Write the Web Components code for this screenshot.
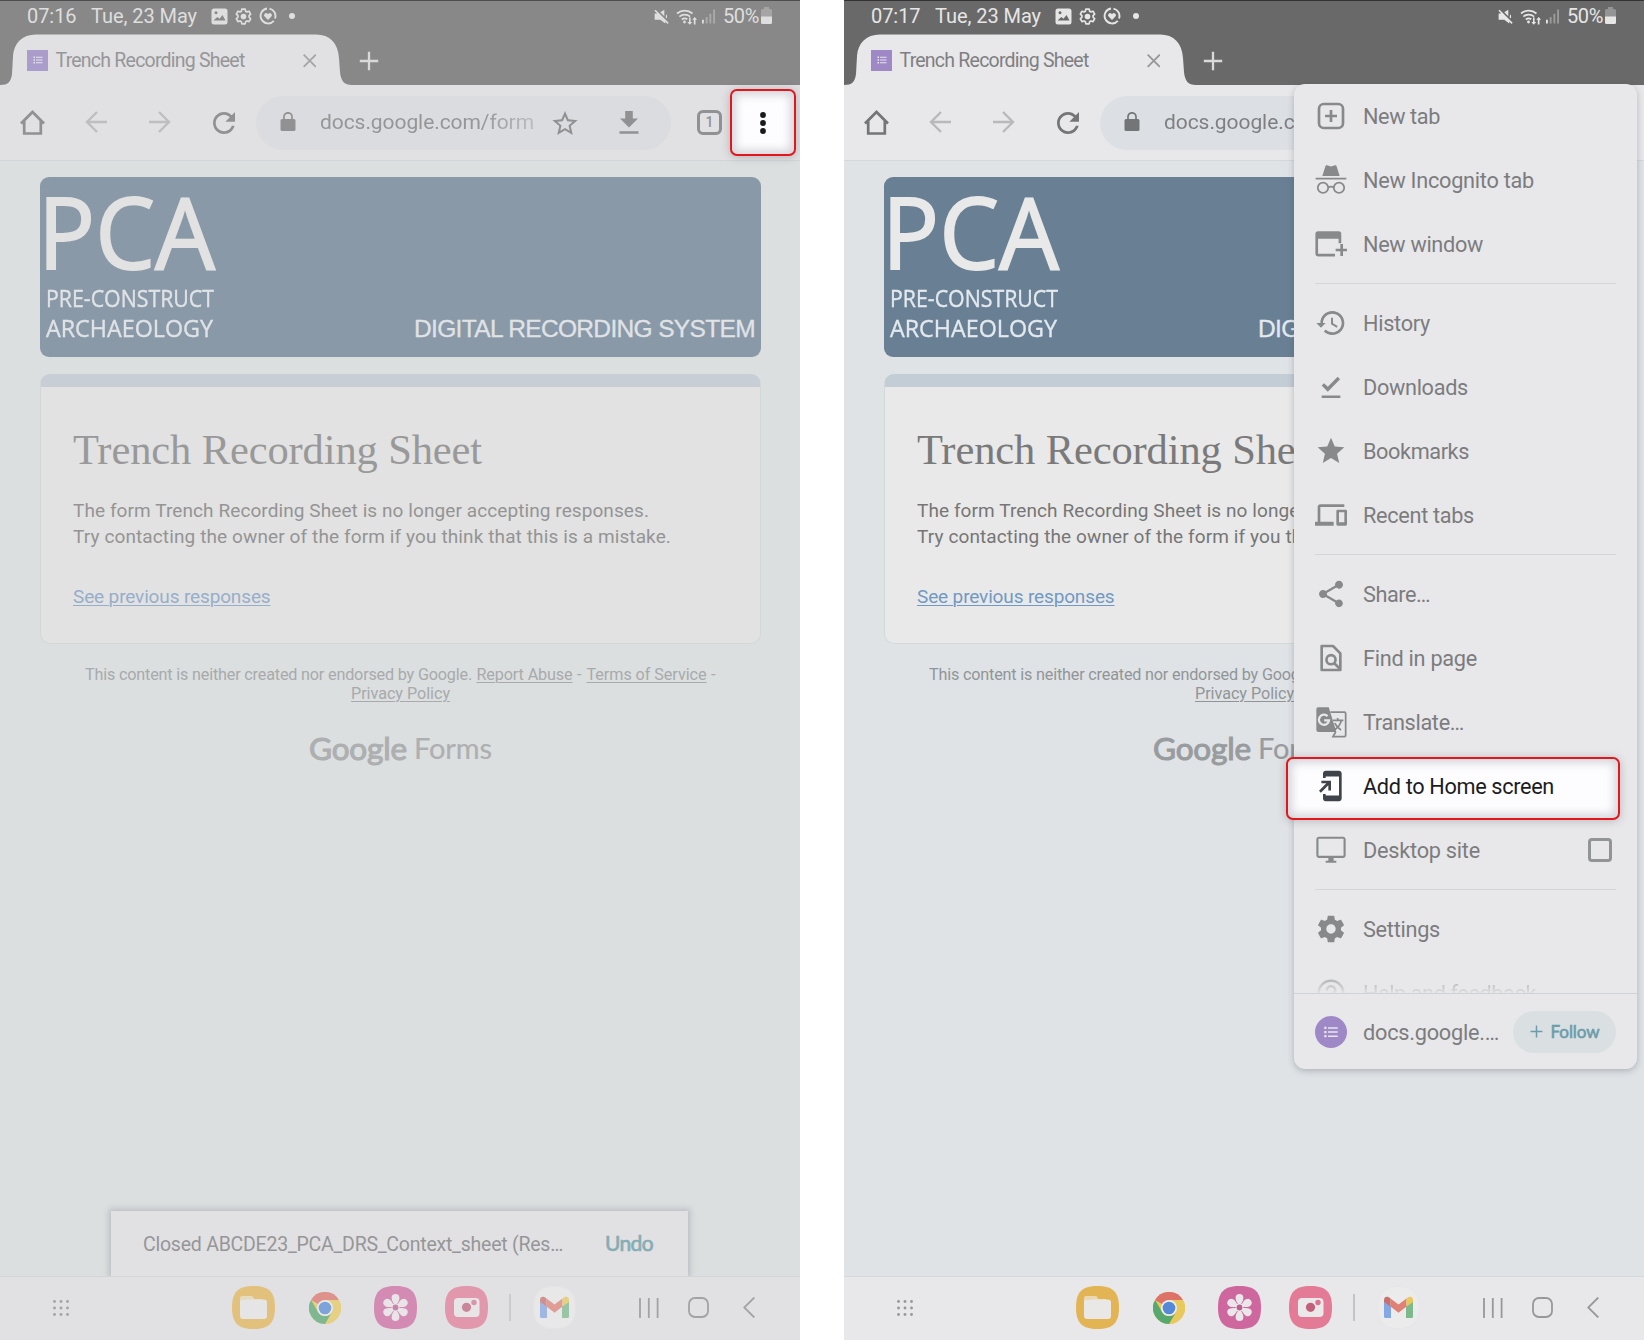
<!DOCTYPE html>
<html lang="en">
<head>
<meta charset="utf-8">
<title>Trench Recording Sheet</title>
<style>
html,body{margin:0;background:#fff}
body{width:1644px;height:1340px;overflow:hidden;display:flex;gap:44px;font-family:Roboto,"Liberation Sans",sans-serif}
</style>
</head>
<body>
<phone-screen variant="before">
  <status-bar slot="chrome"><fit-text w="49.5">07:16</fit-text></status-bar>
  <tab-strip slot="chrome"></tab-strip>
  <tool-bar slot="chrome"></tool-bar>
  <form-page></form-page>
  <snack-bar slot="over"></snack-bar>
  <dock-bar slot="dock"></dock-bar>
  <call-out slot="over" style="left:730px;top:89px;width:66px;height:67px" class="dots"><ui-icon name="dots" w="8" h="24"></ui-icon></call-out>
</phone-screen>
<phone-screen variant="after">
  <status-bar slot="chrome"><fit-text w="49.5">07:17</fit-text></status-bar>
  <tab-strip slot="chrome"></tab-strip>
  <tool-bar slot="chrome"></tool-bar>
  <form-page></form-page>
  <overflow-menu slot="over"></overflow-menu>
  <dock-bar slot="dock"></dock-bar>
</phone-screen>
<script>
const define = (name, html, init) => {
  const tpl = document.createElement('template');
  tpl.innerHTML = html;
  customElements.define(name, class extends HTMLElement {
    constructor() {
      super();
      this.attachShadow({ mode: 'open' }).append(tpl.content.cloneNode(true));
    }
    connectedCallback() { if (init) init.call(this); }
  });
};

const LIST = '<path d="M3 5h3v3H3zM3 10.5h3v3H3zM3 16h3v3H3zM8 5.5h13v2H8zM8 11h13v2H8zM8 16.5h13v2H8z"/>';
const ICONS = {
  dots: ['0 0 8 24', '<circle cx="4" cy="4" r="2.9"/><circle cx="4" cy="12" r="2.9"/><circle cx="4" cy="20" r="2.9"/>'],
  list: ['0 0 24 24', LIST],
  image: ['0 0 17 17', '<path fill-rule="evenodd" d="M3 .5h11A2.5 2.5 0 0 1 16.500 3v11a2.500 2.500 0 0 1-2.500 2.500H3A2.500 2.500 0 0 1 .5 14V3A2.500 2.500 0 0 1 3 .5zM2.500 12.500h12l-3-5.500-3 3.700-2.200-1.700zM5 3.300a1.500 1.500 0 1 0 .01 0z"/>'],
  gearline: ['0 0 24 24', '<path fill="none" stroke="currentColor" stroke-width="2.400" stroke-linejoin="round" d="M9.700 1.500h4.600l.7 3 1.800 1 3-.9 2.300 4-2.200 2.200v2.200l2.200 2.200-2.300 4-3-.9-1.800 1-.7 3.200H9.700l-.7-3.200-1.800-1-3 .9-2.300-4L4.100 13v-2.200L1.900 8.600l2.300-4 3 .9 1.800-1z"/><circle cx="12" cy="12" r="4"/>'],
  heart: ['0 0 18 18', '<path fill="none" stroke="currentColor" stroke-width="1.900" d="M8 1.500A7.500 7.500 0 1 0 14.800 13.800M16 11.500A7.500 7.500 0 0 0 10.500 1.600"/><path d="M9 13 5.600 9.600a2 2 0 0 1 3-2.800l.4.4.4-.4a2 2 0 0 1 3 2.800z"/>'],
  mute: ['0 0 24 24', '<path d="M16.500 1v10.500L10 5zM1 7h5l12 12.500V23l-8-6H1zM2.500 1 23.500 22l-1.800 1.800L.7 2.800zM19.500 8.500c1.500 1.500 2 4 1 6.500l-2-2z"/>'],
  wifi: ['0 0 22 17', '<g fill="none" stroke="currentColor" stroke-width="1.700"><path d="M1 5.500a12 12 0 0 1 15.500 0M3.400 8.600a8 8 0 0 1 10.700 0M5.800 11.500a4.600 4.600 0 0 1 5.500-.2"/></g><circle cx="8.500" cy="14" r="1.400"/><path d="M13 9.500h1.600V14h1.600L13.800 16.800 11.300 14H13zM17.800 16.500v-4.700h-1.500l2.400-2.800 2.400 2.800h-1.600v4.700z"/>'],
  signal: ['0 0 14 15', '<path d="M0 11h2v4H0z"/><path opacity=".4" d="M4 8h2v7H4zM8 4.500h2V15H8zM12 0h2v15h-2z"/>'],
  battery: ['0 0 11 17', '<path opacity=".35" d="M3 0h5v2h1.500A1.500 1.500 0 0 1 11 3.500V10H0V3.500A1.500 1.500 0 0 1 1.500 2H3z"/><path d="M0 9.500h11v6A1.500 1.500 0 0 1 9.500 17h-8A1.500 1.500 0 0 1 0 15.500z"/>'],
  close: ['0 0 14 14', '<path fill="none" stroke="currentColor" stroke-width="1.900" d="m.7.7 12.600 12.600m0-12.600L.7 13.300"/>'],
  plus: ['0 0 20 20', '<path fill="none" stroke="currentColor" stroke-width="2.300" d="M10 .8v18.400M.8 10h18.400"/>'],
  home: ['0 0 25 25', '<path fill="none" stroke="currentColor" stroke-width="2.700" d="M1 13.500 12.500 2 24 13.500M4.200 11v12.500h16.600V11"/>'],
  back: ['0 0 22 22', '<path fill="none" stroke="currentColor" stroke-width="2.400" d="M22 11H2M12 1 2 11l10 10"/>'],
  forward: ['0 0 22 22', '<path fill="none" stroke="currentColor" stroke-width="2.400" d="M0 11h20M10 1l10 10-10 10"/>'],
  reload: ['4 4 16 16', '<path d="M17.650 6.350C16.200 4.900 14.210 4 12 4c-4.420 0-7.990 3.580-7.990 8s3.570 8 7.990 8c3.730 0 6.840-2.550 7.730-6h-2.080c-.82 2.330-3.040 4-5.650 4-3.310 0-6-2.690-6-6s2.690-6 6-6c1.660 0 3.140.69 4.220 1.780L13 11h7V4l-2.350 2.350z"/>'],
  lock: ['0 0 16 19', '<path d="M2 7h12q1.500 0 1.500 1.500v9q0 1.500-1.500 1.500H2Q.5 19 .5 17.500v-9Q.5 7 2 7z"/><path fill="none" stroke="currentColor" stroke-width="1.700" d="M4 8V4.800a4 4 0 0 1 8 0V8"/>'],
  starline: ['2 2 20 19', '<path d="M22 9.240l-7.190-.62L12 2 9.190 8.630 2 9.240l5.460 4.730L5.820 21 12 17.270 18.180 21l-1.630-7.030L22 9.240zM12 15.400l-3.760 2.270 1-4.280-3.320-2.880 4.380-.38L12 6.100l1.710 4.040 4.380.38-3.320 2.880 1 4.280L12 15.400z"/>'],
  download: ['0 0 20 23', '<path d="M6.200 0h7.600v7.500H19L10 16.500 1 7.500h5.200zM.5 20.200h19v2.600H.5z"/>'],
  newtab: ['0 0 24 24', '<rect x="3" y="3" width="18" height="18" rx="3.600" fill="none" stroke="currentColor" stroke-width="2"/><path d="M11 7.500h2V11h3.500v2H13v3.500h-2V13H7.500v-2H11z"/>'],
  incognito: ['0 0 24 24', '<path d="M7.800 1.600c.2-.6.700-.8 1.200-.6L12 1.800 15 1c.5-.2 1 .1 1.200.6L18.500 9h-13zM.5 10.300h23v1.300H.5z"/><g fill="none" stroke="currentColor" stroke-width="1.350"><circle cx="6" cy="17.800" r="3.900"/><circle cx="18" cy="17.800" r="3.900"/><path d="M9.900 17.500q2.100-1.100 4.200 0"/></g>'],
  window: ['0 0 24 24', '<path fill-rule="evenodd" d="M2.300 2.500h15.400A2 2 0 0 1 19.700 4.500v7h-2V8H2.300v11.300H15v2H2.300a2 2 0 0 1-2-2V4.500a2 2 0 0 1 2-2zM19 12h2v3.500h3v2h-3V21h-2v-3.500h-3.500v-2H19z"/>'],
  history: ['0 0 24 24', '<path d="M13 3c-4.970 0-9 4.030-9 9H1l3.500 3.500L8 12H6c0-3.870 3.130-7 7-7s7 3.130 7 7-3.130 7-7 7c-1.930 0-3.680-.79-4.940-2.060l-1.420 1.420C8.270 19.990 10.510 21 13 21c4.970 0 9-4.030 9-9s-4.030-9-9-9zm-1 5v5l4.280 2.540.72-1.210-3.500-2.080V8H12z"/>'],
  done: ['0 0 24 24', '<path d="M5 18.300h14v2H5zM9.600 15.500 5 10.900l1.800-1.800 2.800 2.800L17 4.300l1.800 1.900z"/>'],
  star: ['0 0 24 24', '<path d="M12 17.270L18.180 21l-1.640-7.030L22 9.240l-7.190-.61L12 2 9.190 8.630 2 9.240l5.460 4.730L5.820 21z"/>'],
  devices: ['0 0 24 24', '<path d="M4 6h18V4H4c-1.100 0-2 .9-2 2v11H0v3h14v-3H4V6zm19 2h-6c-.55 0-1 .45-1 1v10c0 .55.450 1 1 1h6c.55 0 1-.45 1-1V9c0-.55-.45-1-1-1zm-1 9.500h-4V10h4v7.500z"/>'],
  share: ['0 0 24 24', '<path d="M18 16.080c-.76 0-1.440.3-1.960.77L8.910 12.700c.05-.23.090-.46.090-.7s-.04-.47-.09-.7l7.050-4.110c.54.5 1.250.81 2.040.81 1.660 0 3-1.340 3-3s-1.340-3-3-3-3 1.340-3 3c0 .24.040.47.090.7L8.040 9.810C7.500 9.310 6.790 9 6 9c-1.660 0-3 1.340-3 3s1.340 3 3 3c.79 0 1.500-.31 2.040-.81l7.120 4.160c-.05.21-.08.430-.08.650 0 1.610 1.310 2.920 2.920 2.920s2.920-1.310 2.920-2.920-1.310-2.920-2.920-2.920z"/>'],
  find: ['0 0 24 24', '<g fill="none" stroke="currentColor" stroke-width="2"><path stroke-linejoin="round" d="M5 3h8.500L19 8.500V21H5z"/><circle cx="12" cy="13.300" r="3.400"/><path d="m14.300 15.800 4.500 4.500"/></g>'],
  translate: ['0 0 24 24', '<path d="M2.500 1h7.800L16 19.500H2.500A1.500 1.500 0 0 1 1 18V2.500A1.500 1.500 0 0 1 2.500 1z"/><path fill="none" stroke="var(--menu-bg)" stroke-width="1.700" d="M9.400 7.600A3.800 3.800 0 1 0 10.500 10.700H6.900"/><g fill="none" stroke="currentColor" stroke-width="1.300"><path d="M11.500 4.600H22q1 0 1 1V22q0 1-1 1h-8.500l2-3.500M13.500 10.800h7.800M17 9v1.800M19.800 10.800c-.6 2.900-2.200 5-5 7M14.800 12.800c1 2.200 2.700 3.900 4.700 5.200"/></g>'],
  addhome: ['0 0 24 24', '<path d="M18 .6 8 .6C6.900.6 6 1.500 6 2.600V6h2V4.800h10v14.400H8V18H6v3.400c0 1.100.9 2 2 2h10c1.100 0 2-.9 2-2V2.600c0-1.100-.9-2-2-2zM10 15.300h2V8H4.800v2h3.700L3 15.600 4.400 17 10 11.500z"/>'],
  desktop: ['0 0 24 24', '<path d="M21 2H3c-1.100 0-2 .9-2 2v12c0 1.100.9 2 2 2h7v2H8v1.600h8V20h-2v-2h7c1.100 0 2-.9 2-2V4c0-1.100-.9-2-2-2zm.4 14.400H2.600V3.600h18.800v12.800z"/>'],
  settings: ['0 0 24 24', '<path d="M19.430 12.980c.04-.32.070-.64.070-.98s-.03-.66-.07-.98l2.110-1.650c.19-.15.240-.42.120-.64l-2-3.460c-.12-.22-.39-.3-.61-.22l-2.490 1c-.52-.4-1.080-.73-1.690-.98l-.38-2.650C14.460 2.180 14.250 2 14 2h-4c-.25 0-.46.180-.49.420l-.38 2.650c-.61.250-1.170.590-1.690.980l-2.490-1c-.23-.09-.49 0-.61.220l-2 3.460c-.13.220-.07.490.12.640l2.110 1.650c-.04.32-.07.650-.07.980s.03.660.07.980l-2.110 1.650c-.19.150-.24.420-.12.640l2 3.460c.12.220.39.300.61.220l2.490-1c.52.400 1.080.730 1.690.980l.38 2.650c.03.240.24.420.49.420h4c.25 0 .46-.18.490-.42l.38-2.650c.61-.25 1.170-.59 1.690-.98l2.490 1c.23.090.49 0 .61-.22l2-3.460c.12-.22.070-.49-.12-.64l-2.110-1.650zM12 15.500c-1.930 0-3.500-1.570-3.500-3.500s1.570-3.500 3.500-3.500 3.500 1.570 3.500 3.500-1.570 3.500-3.500 3.500z"/>'],
  help: ['0 0 24 24', '<g fill="none" stroke="currentColor" stroke-width="1.900"><circle cx="12" cy="12" r="9.200"/><path d="M8.800 10.200A3.200 3.200 0 0 1 15.200 10c0 2.200-3.200 2.500-3.200 5"/></g>'],
  grid: ['0 0 16 16', [1.5,8,14.5].map(y => [1.5,8,14.5].map(x => `<circle cx="${x}" cy="${y}" r="1.450"/>`).join('')).join('')],
  files: ['0 0 43 43', '<path fill="#e3b453" d="M21.500 0C37 0 43 6 43 21.500S37 43 21.500 43 0 37 0 21.500 6 0 21.500 0z"/><path fill="#ead9b0" d="M8 12q0-2 2-2h9.500q1.500 0 2 1.500l.5 1.500H30v6H8z"/><path fill="#e9e8e6" d="M8 15.500q0-1.500 1.500-1.500l10-.5H32q3 0 3 3V30q0 3-3 3H11q-3 0-3-3z"/>'],
  chrome: ['0 0 32 32', '<circle cx="16" cy="16" r="16" fill="#e9c95c"/><path fill="#dc7268" d="M16 16 2.100 8A16 16 0 0 1 29.900 8z"/><path fill="#e9c95c" d="M16 8h13.900A16 16 0 0 1 16 32l7-12z"/><path fill="#56a86e" d="M2.100 8A16 16 0 0 0 16 32l7-12a8 8 0 0 1-13.900 0z"/><circle cx="16" cy="16" r="8" fill="#eceded"/><circle cx="16" cy="16" r="6.300" fill="#5589d8"/>'],
  flower: ['0 0 43 43', '<path fill="#cf679f" d="M21.500 0C37 0 43 6 43 21.500S37 43 21.500 43 0 37 0 21.500 6 0 21.500 0z"/><g fill="#ebe6ea">' + [0,60,120,180,240,300].map(a => `<path transform="rotate(${a} 21.500 21.500)" d="M21.500 21c-1-3-3.900-5.600-3.900-9a3.900 3.900 0 0 1 7.800 0c0 3.400-2.900 6-3.900 9z"/>`).join('') + '</g><circle cx="21.500" cy="21.500" r="3.900" fill="#ebe6ea"/><circle cx="21.500" cy="21.500" r="2.900" fill="#bb5f91"/>'],
  camera: ['0 0 43 43', '<path fill="#e37a96" d="M21.500 0C37 0 43 6 43 21.500S37 43 21.500 43 0 37 0 21.500 6 0 21.500 0z"/><rect x="9" y="12" width="25.500" height="19" rx="4" fill="#ebe8ea"/><circle cx="21.500" cy="21.300" r="4.600" fill="#c2607c"/><circle cx="29" cy="16.500" r="2.700" fill="#d77590"/>'],
  gmail: ['0 0 43 43', '<path fill="#ebebeb" stroke="#e6e6ea" d="M21.500.5C36 .5 42.500 7 42.500 21.500S36 42.500 21.500 42.500.5 36 .5 21.500 7 .5 21.500.500z"/><path fill="#84a8e3" d="M7 15l7 5v12H8.500Q7 32 7 30.500z"/><path fill="#7db98d" d="M36 15l-7 5v12h5.500q1.500 0 1.500-1.500z"/><path fill="#e08176" d="M13.500 12.500l8 6 8-6v8l-8 6.300-8-6.300z"/><path fill="#c96f6c" d="M7 14c0-3.500 3.500-4.500 6.500-1.500v8L7 16z"/><path fill="#e9c95c" d="M36 14c0-3.500-3.500-4.500-6.500-1.500v8L36 16z"/>'],
  recents: ['0 0 20 20', '<path fill="none" stroke="currentColor" stroke-width="1.800" d="M1 0v20M9.800 0v20M18.600 0v20"/>'],
  homekey: ['0 0 21 21', '<rect x="1" y="1" width="19" height="19" rx="6" fill="none" stroke="currentColor" stroke-width="1.800"/>'],
  backkey: ['0 0 12 21', '<path fill="none" stroke="currentColor" stroke-width="1.800" d="M11.300.5 1.200 10.500l10.100 10"/>']
};

define('ui-icon', '<style>:host{display:block;flex:none;line-height:0}svg{display:block}</style>', function () {
  const [box, body] = ICONS[this.getAttribute('name')];
  const w = this.getAttribute('w') || 32, h = this.getAttribute('h') || w;
  if (!this.shadowRoot.querySelector('svg'))
    this.shadowRoot.innerHTML += `<svg width="${w}" height="${h}" viewBox="${box}" fill="currentColor">${body}</svg>`;
});

define('phone-screen', `<style>
:host{--bar:#e1e1e3;--status:#888;--edge:#4e4e4e;--page:#dbdfe0;--banner:#8999a8;--bannertext:#e0e3e6;--card:#e2e2e2;--stripe:#c8ced6;
--line:#d2d6d8;--title:#999;--body:#949494;--link:#97aeca;--foot:#a8aaab;--logo:#adafb0;--statustext:#dedede;--tabtext:#969698;--x:#a6a6a8;--tool:#919193;--faint:#bebec0;
--omni:#dadce0;--fav:#ab9dcb;--keys:#a3a3a6;--appop:.7;--sep:#c2c2c4;--menu-bg:#e8e8ea;
display:flex;flex-direction:column;position:relative;width:800px;height:1340px;flex:none;overflow:hidden;background:var(--page)}
:host([variant=after]){--bar:#e8e8ea;--status:#696969;--edge:#333;--page:#dfe3e6;--banner:#698094;--bannertext:#e3e9ee;--card:#e9e9e9;--stripe:#c3cdd5;
--line:#d3d8db;--title:#7a7a7a;--body:#767676;--link:#7199c4;--foot:#919598;--logo:#999c9e;--statustext:#e6e6e6;--tabtext:#7f7f82;--x:#98989b;--tool:#747577;--faint:#b9b9bb;
--omni:#dce0e5;--fav:#9f88c6;--keys:#98989b;--appop:1;--sep:#c4c4c6}
main{flex:1;min-height:0;display:flex;flex-direction:column}
</style><slot name="chrome"></slot><main><slot></slot></main><slot name="dock"></slot><slot name="over"></slot>`);

define('status-bar', `<style>
:host{display:flex;box-sizing:border-box;height:34px;background:var(--status);border-top:1px solid var(--edge);color:var(--statustext);font-size:20px;line-height:31px;padding:0 27px 0 27px;align-items:flex-start}
.t{display:flex;gap:14.500px;width:184px}.i,.r{display:flex;align-items:center;height:30px}.i{gap:7px}.r{margin-left:auto}
b{width:6px;height:6px;border-radius:50%;background:currentColor;margin-left:5px}
</style><div class="t"><slot></slot><fit-text w="106">Tue, 23 May</fit-text></div>
<div class="i"><ui-icon name="image" w="17"></ui-icon><ui-icon name="gearline" w="17"></ui-icon><ui-icon name="heart" w="18"></ui-icon><b></b></div>
<div class="r"><ui-icon name="mute" w="15"></ui-icon><ui-icon name="wifi" w="22" h="17" style="margin-left:7px"></ui-icon><ui-icon name="signal" w="13" h="15" style="margin-left:4px"></ui-icon><fit-text w="36" style="margin-left:8px">50%</fit-text><ui-icon name="battery" w="11" h="17" style="margin:0 1px 2px 2px"></ui-icon></div>`);

define('tab-strip', `<style>
:host{display:flex;align-items:flex-start;height:51px;background:var(--status)}
.tab{width:352px;height:51px;display:flex;align-items:center;box-sizing:border-box;padding:1px 36px 0 27px;color:var(--tabtext);font-size:19.500px;
background:var(--bar);clip-path:path("M0 51C8 51 11 48 12 40L13 22C14 9 22 .5 36 .5H316C330 .5 338 9 339 24L340 38C341 47 344 51 352 51Z")}
.f{width:21px;height:21px;background:var(--fav);color:#e8e4f0;display:grid;place-items:center;margin:0 7.500px 0 0}
fit-text{line-height:51px;padding-top:1px}.x{margin-left:auto;margin-top:2px;color:var(--x)}
.p{color:#d9d9d9;margin:17px 0 0 7px}
</style><div class="tab"><span class="f"><ui-icon name="list" w="12"></ui-icon></span><fit-text w="189">Trench Recording Sheet</fit-text><ui-icon class="x" name="close" w="13.500"></ui-icon></div><ui-icon class="p" name="plus" w="20"></ui-icon>`);

define('tool-bar', `<style>
:host{display:flex;align-items:center;box-sizing:border-box;height:76px;background:var(--bar);border-bottom:1px solid var(--line);padding:0 33px 0 20px;color:var(--tool)}
.faint{color:var(--faint)}
.o{display:flex;align-items:center;width:415px;height:54px;border-radius:27px;background:var(--omni);margin:0 0 0 21px;box-sizing:border-box;padding-left:24px}
.u{width:213px;overflow:hidden;margin-left:24px;font-size:21px;line-height:53px;height:54px;color:var(--tabtext);-webkit-mask-image:linear-gradient(90deg,#000 75%,rgba(0,0,0,.45))}
.n{width:25px;height:25px;box-sizing:border-box;border:3px solid;border-radius:6px;font:500 14px/19px Roboto,sans-serif;text-align:center;margin-left:26px}
.m{margin-left:auto}
</style><ui-icon name="home" w="25"></ui-icon><ui-icon class="faint" name="back" w="22" style="margin:0 0 1px 40px"></ui-icon><ui-icon class="faint" name="forward" w="22" style="margin:0 0 1px 42px"></ui-icon><ui-icon name="reload" w="22" style="margin-left:42px"></ui-icon>
<div class="o"><ui-icon name="lock" w="16" h="19" style="margin-bottom:2px"></ui-icon><div class="u"><fit-text w="214">docs.google.com/form</fit-text></div><ui-icon name="starline" w="26" h="24" style="margin-left:19px"></ui-icon><ui-icon name="download" w="20" h="23" style="margin-left:41px"></ui-icon></div>
<div class="n">1</div><ui-icon class="m" name="dots" w="8" h="24"></ui-icon>`);

define('form-page', `<style>
:host{display:flex;flex-direction:column;padding:16px 39px 0 40px;color:var(--body)}
.banner{height:180px;border-radius:9px;background:var(--banner);color:var(--bannertext);display:flex;justify-content:space-between;align-items:flex-end;box-sizing:border-box;padding:0 6px 13px 6px;font-family:"Open Sans","Noto Sans",sans-serif}
.logo{display:flex;flex-direction:column;align-items:flex-start;font-size:23.500px;line-height:30px;padding-bottom:1px;-webkit-text-stroke:.35px}
.big{font-size:99px;line-height:100px;height:100px;margin:0 0 2px -8px;color:var(--card);-webkit-text-stroke:1.800px}
.drs{font:24.500px/30px "Liberation Sans",sans-serif;-webkit-text-stroke:.3px}
.card{margin-top:17px;height:270px;box-sizing:border-box;border:1px solid var(--line);border-top:13px solid var(--stripe);border-radius:10px;background:var(--card);padding:0 32px;font-size:19px;line-height:26px;display:flex;flex-direction:column;align-items:flex-start}
h1{margin:36px 0 0;font:400 42.500px/54px "Liberation Serif",serif;color:var(--title)}
.p{margin:21px 0 0;display:flex;flex-direction:column}
a{color:inherit;text-decoration:underline;text-underline-offset:2px;text-decoration-thickness:1px}
.l{color:var(--link);margin-top:34px;line-height:26px}
footer{display:flex;flex-direction:column;align-items:center;margin-top:21px;font-size:16.200px;line-height:19px;color:var(--foot)}
.r{display:flex;gap:4.500px}
.g{display:flex;gap:7px;margin-top:22px;height:46px;line-height:46px;color:var(--logo);font-family:Lato,sans-serif;font-size:31.500px;-webkit-text-stroke:1.100px}
.g .f{font-size:29px;-webkit-text-stroke:.2px}
</style><div class="banner"><div class="logo"><fit-text class="big" mode="scale" w="177">PCA</fit-text><fit-text mode="scale" w="168">PRE-CONSTRUCT</fit-text><fit-text mode="scale" w="167">ARCHAEOLOGY</fit-text></div><fit-text class="drs" w="341">DIGITAL RECORDING SYSTEM</fit-text></div>
<div class="card"><h1><fit-text w="409">Trench Recording Sheet</fit-text></h1>
<div class="p"><fit-text w="576">The form Trench Recording Sheet is no longer accepting responses.</fit-text><fit-text w="598">Try contacting the owner of the form if you think that this is a mistake.</fit-text></div>
<div class="l"><fit-text w="197.5"><a>See previous responses</a></fit-text></div></div>
<footer><div class="r"><fit-text w="387">This content is neither created nor endorsed by Google.</fit-text><fit-text w="96"><a>Report Abuse</a></fit-text><fit-text w="5">-</fit-text><fit-text w="120"><a>Terms of Service</a></fit-text><fit-text w="5">-</fit-text></div><fit-text w="99"><a>Privacy Policy</a></fit-text>
<div class="g"><fit-text w="98">Google</fit-text><fit-text class="f" w="78">Forms</fit-text></div></footer>`);

define('snack-bar', `<style>
:host{position:absolute;left:111px;top:1211px;width:577px;height:65px;background:var(--bar);box-shadow:0 0 6px 2px rgba(80,80,90,.24);clip-path:inset(-10px -10px 0 -10px);display:flex;justify-content:space-between;box-sizing:border-box;padding:1px 35px 0 32px;color:var(--tabtext);font-size:19.500px;line-height:66px}
.u{font:400 21px/61px Lato,sans-serif;color:#86adb4;-webkit-text-stroke:.7px}
</style><fit-text w="420">Closed ABCDE23_PCA_DRS_Context_sheet (Res…</fit-text><fit-text class="u" w="48">Undo</fit-text>`);

define('dock-bar', `<style>
:host{display:flex;align-items:center;box-sizing:border-box;height:64px;background:var(--bar);border-top:1px solid var(--line);color:var(--keys);padding:0 45px 2px 53px;position:relative}
.a{display:flex;align-items:center;opacity:var(--appop);margin-left:163px}
i{width:2px;height:27px;background:var(--sep);margin:0 22px 0 21px}
.k{display:flex;align-items:center;margin-left:auto;color:var(--keys)}
</style><ui-icon name="grid" w="16"></ui-icon>
<div class="a"><ui-icon name="files" w="43"></ui-icon><ui-icon name="chrome" w="32" style="margin:0 33.500px"></ui-icon><ui-icon name="flower" w="43"></ui-icon><ui-icon name="camera" w="43" style="margin-left:28px"></ui-icon><i></i><ui-icon name="gmail" w="43"></ui-icon></div>
<div class="k"><ui-icon name="recents" w="20"></ui-icon><ui-icon name="homekey" w="21" style="margin:0 34px 0 29px"></ui-icon><ui-icon name="backkey" w="12" h="21"></ui-icon></div>`);

define('call-out', `<style>
:host{position:absolute;box-sizing:border-box;display:flex;align-items:center;border:2px solid #e2161d;border-radius:7px;background:#fdfdff;color:#191a1c;
box-shadow:inset 0 0 8px 4px rgba(150,150,160,.38),0 1px 9px rgba(60,60,70,.28)}
:host(.dots){justify-content:center;padding-top:1px}
</style><slot></slot>`);

define('menu-item', `<style>
:host{display:flex;align-items:center;height:64px;color:var(--mt,#7c7c7e);font-size:21.700px;line-height:64px}
ui-icon{color:var(--mi,#87898b);margin-right:16px}
.t{padding-top:2px}
</style><slot name="icon"></slot><div class="t"><slot></slot></div>`, function () {
  const ic = document.createElement('ui-icon');
  ic.setAttribute('name', this.getAttribute('icon'));
  this.shadowRoot.querySelector('slot').replaceWith(ic);
});

define('overflow-menu', `<style>
:host{position:absolute;left:450px;top:84px;width:343px;height:985px;background:var(--menu-bg);border-radius:11px;box-shadow:0 2px 6px rgba(60,70,80,.3);display:flex;flex-direction:column}
.s{flex:none;height:909px;overflow:hidden;padding:0 21px;position:relative;box-sizing:border-box}
hr{border:0;height:1px;background:#d3d5d8;margin:7px 0}
.row{display:flex;align-items:center;justify-content:space-between}
.box{width:24px;height:24px;box-sizing:border-box;border:3px solid #929496;border-radius:4px;margin-right:4px}
.last{opacity:.6;-webkit-mask-image:linear-gradient(#000 25%,transparent 54%)}
.f{flex:1;border-top:1px solid #d0d2d5;display:flex;align-items:center;padding:1px 21px 0 21px;font-size:21.700px;color:#7c7c7e}
.av{width:32px;height:32px;border-radius:50%;background:#9f88c6;color:#e9e3f2;display:grid;place-items:center;margin-right:16px}
.b{margin-left:auto;width:103px;height:42px;border-radius:21px;background:#dadfe2;color:#6c9caa;display:flex;align-items:center;justify-content:center;gap:8px;font:400 17px/42px Lato,sans-serif;-webkit-text-stroke:.6px;margin-bottom:1px}
call-out{left:-8px;top:673px;width:334px;height:63px;--mt:#1b1c1e;--mi:#3f434a}
call-out menu-item{margin:-5px 0 0 27px}
</style><div class="s">
<menu-item icon="newtab"><fit-text w="77">New tab</fit-text></menu-item>
<menu-item icon="incognito"><fit-text w="171">New Incognito tab</fit-text></menu-item>
<menu-item icon="window"><fit-text w="120">New window</fit-text></menu-item><hr>
<menu-item icon="history"><fit-text w="67">History</fit-text></menu-item>
<menu-item icon="done"><fit-text w="105">Downloads</fit-text></menu-item>
<menu-item icon="star"><fit-text w="106">Bookmarks</fit-text></menu-item>
<menu-item icon="devices"><fit-text w="111">Recent tabs</fit-text></menu-item><hr>
<menu-item icon="share"><fit-text w="67">Share…</fit-text></menu-item>
<menu-item icon="find"><fit-text w="114">Find in page</fit-text></menu-item>
<menu-item icon="translate"><fit-text w="101">Translate…</fit-text></menu-item>
<div style="height:64px"></div>
<div class="row"><menu-item icon="desktop"><fit-text w="117">Desktop site</fit-text></menu-item><span class="box"></span></div><hr>
<menu-item icon="settings"><fit-text w="77">Settings</fit-text></menu-item>
<menu-item class="last" icon="help"><fit-text w="173">Help and feedback</fit-text></menu-item>
</div>
<div class="f"><span class="av"><ui-icon name="list" w="18"></ui-icon></span><fit-text w="136">docs.google.…</fit-text><div class="b"><ui-icon name="plus" w="13"></ui-icon><fit-text w="49">Follow</fit-text></div></div>
<call-out><menu-item icon="addhome"><fit-text w="191">Add to Home screen</fit-text></menu-item></call-out>`);

/* Text set to an exact width, by tracking or by horizontal scale. Registered last so every ancestor is laid out when it measures. */
define('fit-text', '<style>:host{display:inline-block;white-space:nowrap;flex:none}span{display:inline-block;transform-origin:0 50%}</style><span><slot></slot></span>', function () {
  const s = this.shadowRoot.querySelector('span');
  const w = +this.getAttribute('w'), nat = s.getBoundingClientRect().width;
  if (!nat) return;
  if (this.getAttribute('mode') === 'scale') {
    s.style.transform = `scaleX(${w / nat})`;
    this.style.width = w + 'px';
  } else {
    s.style.letterSpacing = (w - nat) / this.textContent.length + 'px';
  }
});
</script>
</body>
</html>
